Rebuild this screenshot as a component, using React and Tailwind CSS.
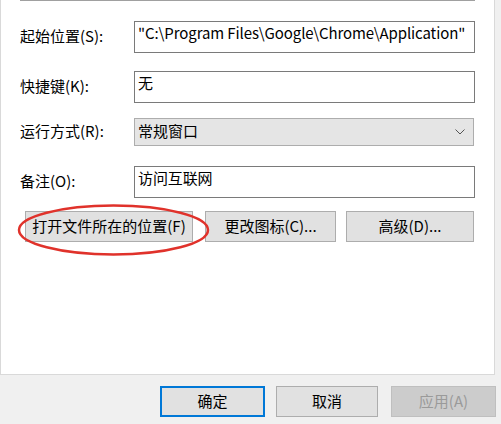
const FONT = { fontFamily: '"Noto Sans CJK SC", "Noto Sans", sans-serif' };

function Field({ label, children, className = '' }) {
  return (
    <div className={'flex items-center ' + className}>
      <div className="w-[133px] pl-[19px] pb-[3px] text-[15px] leading-[20px] text-black">{label}</div>
      {children}
    </div>
  );
}

function TextBox({ value }) {
  return (
    <div className="w-[341px] h-[32px] border border-[#7a7a7a] bg-white px-[3px] pt-[1px] text-[15px] leading-[20px] tracking-[-0.1px] text-black whitespace-nowrap overflow-hidden">
      {value}
    </div>
  );
}

function Btn({ children, className = '' }) {
  return (
    <div className={'h-[31px] flex items-center justify-center border border-[#adadad] bg-[#e1e1e1] text-[15px] text-black ' + className}>
      {children}
    </div>
  );
}

export default function App() {
  return (
    <div className="w-[501px] h-[424px] bg-[#f0f0f0] flex flex-col overflow-hidden" style={FONT}>
      <div className="relative w-[495px] h-[375px] bg-white border-l border-r border-b border-[#d9d9d9]">
        <div className="ml-[19px] w-[455px] h-px bg-[#a0a0a0]" />

        <Field label="起始位置(S):" className="mt-[20px]">
          <TextBox value={'"C:\\Program Files\\Google\\Chrome\\Application"'} />
        </Field>

        <Field label="快捷键(K):" className="mt-[18px]">
          <TextBox value="无" />
        </Field>

        <Field label="运行方式(R):" className="mt-[15px]">
          <div className="w-[340px] h-[28px] border border-[#adadad] bg-[#e5e5e5] flex items-center justify-between pl-[3px] pr-[8px] pb-[1px] text-[15px] text-black">
            <span>常规窗口</span>
            <svg width="10" height="6" viewBox="0 0 10 6" fill="none" stroke="#555" strokeWidth="1">
              <path d="M0.5 0.5 L5 5 L9.5 0.5" />
            </svg>
          </div>
        </Field>

        <Field label="备注(O):" className="mt-[20px]">
          <TextBox value="访问互联网" />
        </Field>

        <div className="flex mt-[13px] pl-[24px] gap-[12px]">
          <Btn className="w-[168px]">打开文件所在的位置(F)</Btn>
          <Btn className="w-[131px]">更改图标(C)...</Btn>
          <Btn className="w-[128px] ml-[-2px]">高级(D)...</Btn>
        </div>

        <svg className="absolute left-0 top-0 pointer-events-none" width="495" height="375">
          <ellipse cx="112.5" cy="230" rx="94.5" ry="24.5" fill="none" stroke="#e0322b" strokeWidth="2.5" />
        </svg>
      </div>

      <div className="flex mt-[11px] pl-[160px] gap-[11px]">
        <div className="w-[105px] h-[31px] flex items-center justify-center border-2 border-[#0078d7] bg-[#e1e1e1] text-[15px] text-black">确定</div>
        <Btn className="w-[102px]">取消</Btn>
        <div className="w-[105px] h-[31px] ml-[2px] flex items-center justify-center border border-[#bfbfbf] bg-[#cccccc] text-[15px] text-[#9a9a9a]">应用(A)</div>
      </div>
    </div>
  );
}
